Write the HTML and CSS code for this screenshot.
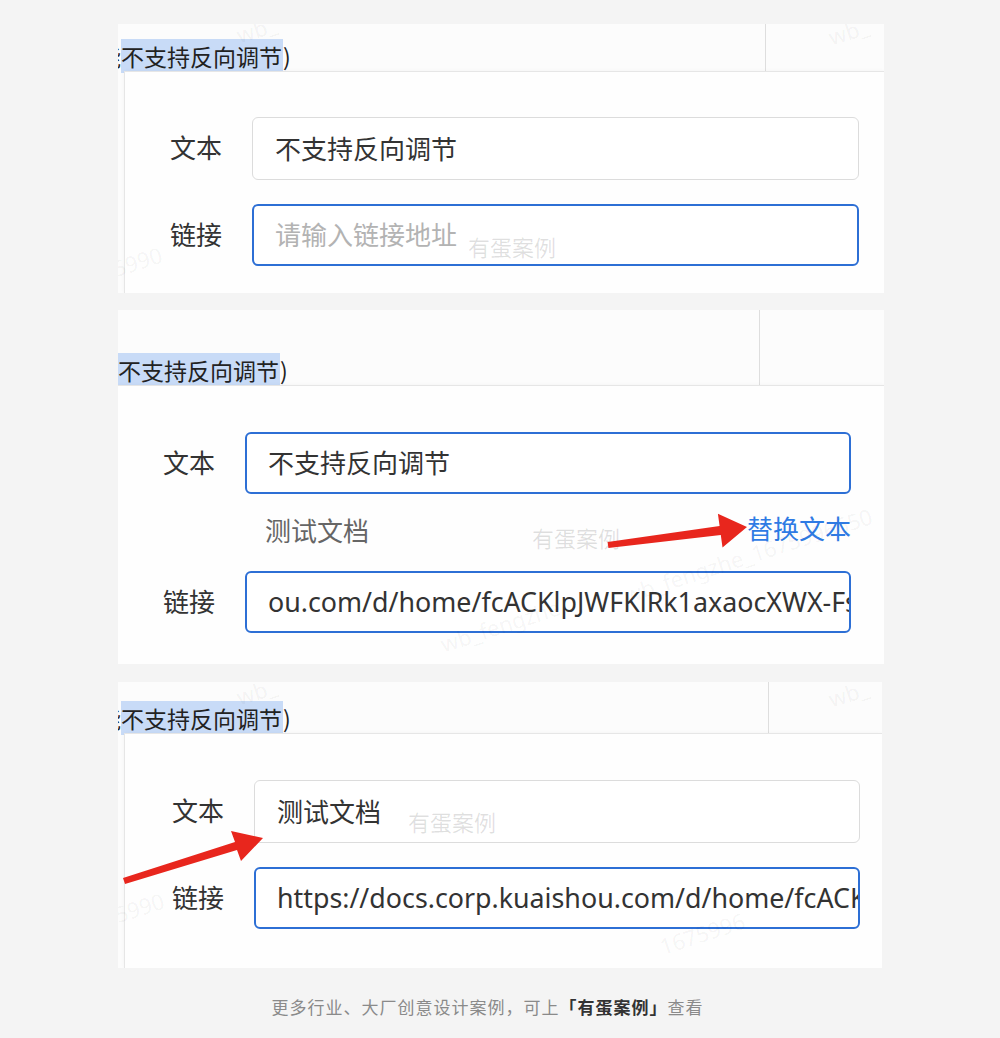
FILE: index.html
```html
<!DOCTYPE html>
<html lang="zh-CN">
<head>
<meta charset="utf-8">
<title>链接编辑</title>
<link rel="stylesheet" href="styles.css">
</head>
<body>
<div class="page">
  <section class="shot s1">
    <div class="strip">
      <div class="crumb"><span class="cut">能</span><span class="hl">不支持反向调节</span>)</div>
      <div class="side"></div>
    </div>
    <div class="card">
      <div class="row"><span class="lbl">文本</span><div class="field">不支持反向调节</div></div>
      <div class="row"><span class="lbl">链接</span><div class="field focus ph">请输入链接地址</div></div>
    </div>
    <span class="wm wm1">有蛋案例</span>
    <span class="wm wm-r wr1">wb_</span>
    <span class="wm wm-r wr2">wb_</span>
    <span class="wm wm-r wr3">5990</span>
  </section>

  <section class="shot s2">
    <div class="strip">
      <div class="crumb"><span class="hl">不支持反向调节</span>)</div>
      <div class="side"></div>
    </div>
    <div class="card">
      <div class="row"><span class="lbl">文本</span><div class="field focus">不支持反向调节</div></div>
      <div class="helper"><span class="doc">测试文档</span><span class="swap">替换文本</span></div>
      <div class="row"><span class="lbl">链接</span><div class="field focus url">ou.com/d/home/fcACKlpJWFKlRk1axaocXWX-FsD</div></div>
    </div>
    <span class="wm wm2">有蛋案例</span>
    <span class="wm wm-r wr4">wb_fengzhe</span>
    <span class="wm wm-r wr5">wb_fengzhe_1675996650</span>
    <svg class="arrow a1" width="766" height="354" viewBox="118 310 766 354">
      <polygon points="607.6,542 719.6,526.1 717.9,513.8 747,527 722.5,547.4 720.8,535.1 608.4,548" />
    </svg>
  </section>

  <section class="shot s3">
    <div class="strip">
      <div class="crumb"><span class="cut">能</span><span class="hl">不支持反向调节</span>)</div>
      <div class="side"></div>
    </div>
    <div class="card">
      <div class="row"><span class="lbl">文本</span><div class="field">测试文档</div></div>
      <div class="row"><span class="lbl">链接</span><div class="field focus url">https://docs.corp.kuaishou.com/d/home/fcACKlpJWFKlRk1axaocXWX</div></div>
    </div>
    <span class="wm wm3">有蛋案例</span>
    <span class="wm wm-r wr6">wb_</span>
    <span class="wm wm-r wr7">wb_</span>
    <span class="wm wm-r wr8">5990</span>
    <span class="wm wm-r wr9">1675996</span>
    <svg class="arrow a2" width="764" height="286" viewBox="118 682 764 286">
      <polygon points="123,878 235,842 231,831 263,838 241,861 237,850 125,884" />
    </svg>
  </section>

  <p class="foot">更多行业、大厂创意设计案例，可上<b>「有蛋案例」</b>查看</p>
</div>
</body>
</html>
```

FILE: styles.css
```css
html, body {
  margin: 0;
  padding: 0;
}
body {
  background: #f4f4f4;
  font-family: "Noto Sans", "Noto Sans CJK SC", sans-serif;
  color: #333;
}
.page {
  width: 1000px;
  height: 1038px;
  padding-top: 24px;
  box-sizing: border-box;
}
.shot {
  position: relative;
  overflow: hidden;
  background: #fcfcfc;
  margin-left: 118px;
  width: 766px;
  display: flex;
  flex-direction: column;
}
.s1 { height: 269px; }
.s2 { height: 354px; margin-top: 17px; }
.s3 { height: 286px; width: 764px; margin-top: 18px; }

.strip {
  display: grid;
  flex: none;
}
.s1 .strip { height: 47px; grid-template-columns: 647px 1fr; }
.s2 .strip { height: 75px; grid-template-columns: 641px 1fr; }
.s3 .strip { height: 51px; grid-template-columns: 650px 1fr; }

.crumb {
  align-self: end;
  font-family: "Noto Sans CJK SC", sans-serif;
  font-size: 23px;
  line-height: 30px;
  color: #222;
  white-space: nowrap;
}
.cut {
  display: inline-block;
  margin-left: -20px;
}
.hl {
  background: #c8dbf7;
  padding-right: 1px;
}
.side {
  border-left: 1px solid #dedede;
}

.card {
  flex: 1;
  background: #fefefe;
  border-top: 1px solid #e6e6e6;
  border-left: 1px solid #e6e6e6;
  box-shadow: 0 0 4px rgba(0, 0, 0, 0.04);
}
.s1 .card { margin-left: 6px; padding: 45px 25px 0 45px; }
.s2 .card { border-left: none; padding: 46px 33px 0 45px; }
.s3 .card { margin-left: 6px; padding: 46px 22px 0 47px; }

.row {
  display: flex;
  align-items: center;
}
.row + .row { margin-top: 24px; }

.lbl {
  flex: none;
  width: 82px;
  font-family: "Noto Sans CJK SC", sans-serif;
  font-size: 26px;
  line-height: 34px;
  color: #333;
  margin-top: -3px;
}
.field {
  flex: 1;
  min-width: 0;
  height: 63px;
  box-sizing: border-box;
  border: 1px solid #dcdcdc;
  border-radius: 6px;
  padding-left: 22px;
  padding-bottom: 3px;
  display: flex;
  align-items: center;
  font-family: "Noto Sans CJK SC", sans-serif;
  font-size: 26px;
  color: #333;
  white-space: nowrap;
  overflow: hidden;
  background: #fff;
}
.field.focus {
  border: 2px solid #2d6fd5;
  padding-left: 21px;
  height: 62px;
}
.ph { color: #b3b3b3; }
.field.url {
  font-family: "Noto Sans", sans-serif;
  font-size: 26.8px;
  padding-bottom: 1px;
}

.helper {
  display: flex;
  justify-content: space-between;
  align-items: center;
  margin: 16px 0 27px 102px;
  height: 34px;
  font-family: "Noto Sans CJK SC", sans-serif;
  font-size: 26px;
}
.doc { color: #666; margin-top: 4px; }
.swap { color: #2f7be4; }

.wm {
  position: absolute;
  font-family: "Noto Sans CJK SC", sans-serif;
  font-size: 22px;
  color: rgba(0, 0, 0, 0.12);
  white-space: nowrap;
  pointer-events: none;
}
.wm-r {
  color: rgba(0, 0, 0, 0.05);
  transform: rotate(-18deg);
  font-family: "Noto Sans", sans-serif;
}
.wm1 { left: 350px; top: 206px; }
.wm2 { left: 414px; top: 211px; }
.wm3 { left: 290px; top: 123px; }
.wr1 { left: 118px; top: -10px; }
.wr2 { left: 710px; top: -8px; }
.wr3 { left: -6px; top: 222px; }
.wr4 { left: 320px; top: 300px; }
.wr5 { left: 500px; top: 230px; }
.wr6 { left: 118px; top: -6px; }
.wr7 { left: 710px; top: -4px; }
.wr8 { left: -4px; top: 210px; }
.wr9 { left: 540px; top: 236px; }

.arrow {
  position: absolute;
  left: 0;
  top: 0;
  pointer-events: none;
}
.arrow polygon {
  fill: #e8261d;
}

.foot {
  margin: 27px 0 0;
  padding-right: 25px;
  text-align: center;
  font-family: "Noto Sans CJK SC", sans-serif;
  font-size: 17px;
  line-height: 24px;
  letter-spacing: 1px;
  color: #8a8a8a;
}
.foot b {
  color: #333;
  font-weight: 700;
}
```
